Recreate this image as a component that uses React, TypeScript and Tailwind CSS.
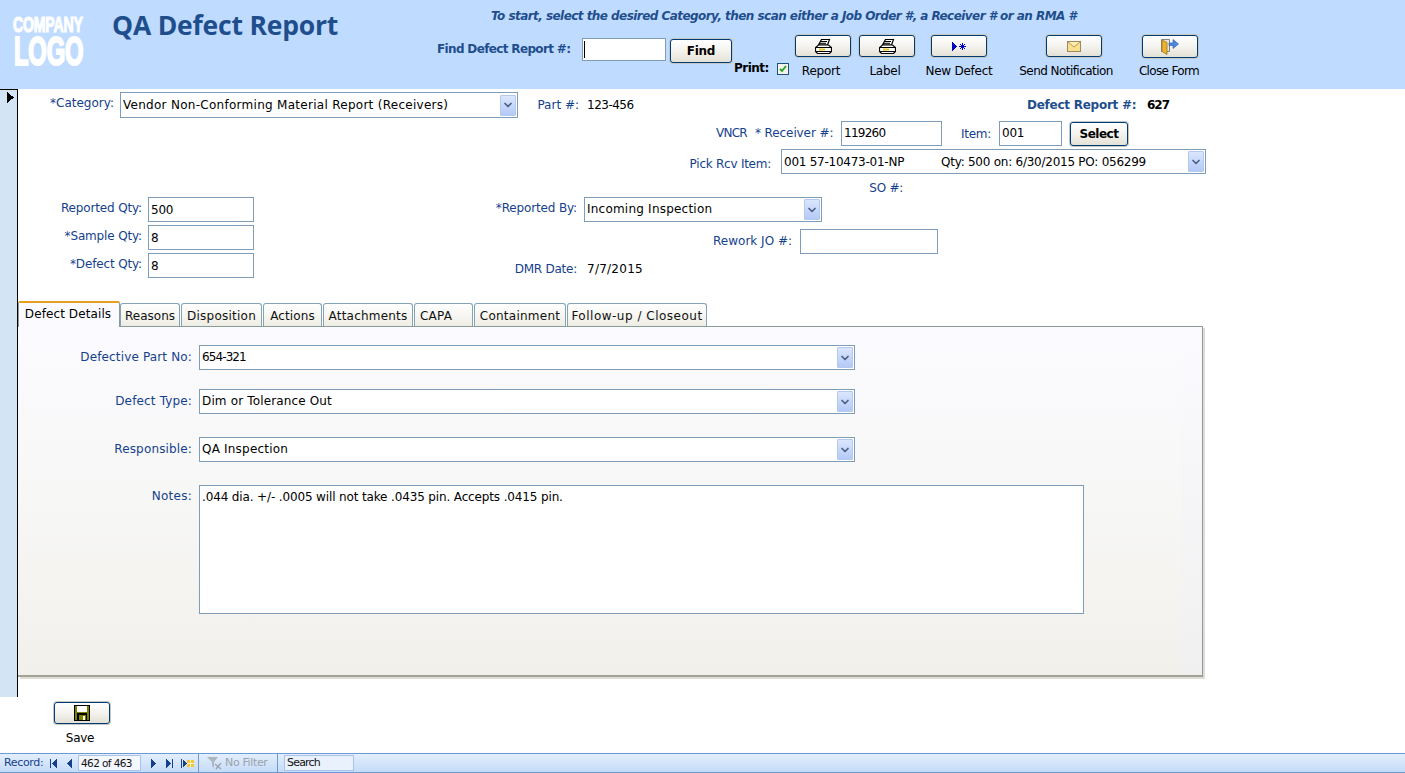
import type { ReactNode } from 'react';
import { ChevronDown } from 'lucide-react';

const uiFont = 'font-["DejaVu_Sans",sans-serif] text-[12px] tracking-[-0.25px]';

function Label({ width, className = '', children }: { width: number; className?: string; children: ReactNode }) {
  return (
    <div className={`shrink-0 text-right text-[#15418c] whitespace-nowrap ${className}`} style={{ width }}>
      {children}
    </div>
  );
}

function TextBox({ width, height = 25, value, className = '' }: { width: number; height?: number; value?: string; className?: string }) {
  return (
    <div
      className={`shrink-0 border border-[#7f9db9] bg-white px-[2px] leading-[22px] text-black whitespace-nowrap ${className}`}
      style={{ width, height }}
    >
      {value}
    </div>
  );
}

function Combo({ width, height = 25, className = '', children }: { width: number; height?: number; className?: string; children: ReactNode }) {
  return (
    <div
      className="shrink-0 flex items-center justify-between border border-[#7f9db9] bg-white pl-[2px] pr-[1px] text-black whitespace-nowrap"
      style={{ width, height }}
    >
      <div className={`flex-1 min-w-0 ${className}`}>{children}</div>
      <div className="flex h-[21px] w-[16px] items-center justify-center rounded-[1px] border border-[#b5c9ef] bg-gradient-to-b from-[#dbe6fd] to-[#b4c9f7]">
        <ChevronDown size={12} strokeWidth={3.5} className="text-[#4d6185]" />
      </div>
    </div>
  );
}

function AccessButton({ width, height = 24, className = '', children }: { width: number; height?: number; className?: string; children: ReactNode }) {
  return (
    <div
      className={`flex shrink-0 items-center justify-center rounded-[3px] border border-[#003c74] bg-gradient-to-b from-white via-[#f4f3ee] to-[#e4e1d6] shadow-[0_0_0_1px_#c4c7c4] ${className}`}
      style={{ width, height }}
    >
      {children}
    </div>
  );
}

function PrinterIcon() {
  return (
    <svg width="17" height="15" viewBox="0 0 17 15">
      <path d="M6.500 0.500h8l-2 5.500h-9z" fill="#fff" stroke="#000" strokeWidth="1.200" />
      <path d="M6 2.500h6M5 4.300h6" stroke="#000" />
      <path d="M3.500 6h10l3 2.500v4l-2 2h-12l-2-2v-4z" fill="#fff" stroke="#000" strokeWidth="1.200" />
      <path d="M1 8.500h15M1 12.500h15" stroke="#000" />
      <path d="M4 10.500h6" stroke="#e6c62c" strokeWidth="2" />
    </svg>
  );
}

function NewRecordIcon() {
  return (
    <svg width="14" height="9" viewBox="0 0 14 9" shapeRendering="crispEdges">
      <path d="M0 0l5 4.500-5 4.500z" fill="#0000c0" />
      <path d="M10.500 1v7M7 4.500h7M8 2l5 5M13 2l-5 5" stroke="#0000c0" />
    </svg>
  );
}

function MailIcon() {
  return (
    <svg width="14" height="11" viewBox="0 0 14 11">
      <rect x="0.500" y="0.500" width="13" height="10" fill="#f8e08e" stroke="#9c8a5e" />
      <path d="M1 1l6 5 6-5" fill="#fdeeb4" stroke="#b89858" />
    </svg>
  );
}

function CloseFormIcon() {
  return (
    <svg width="18" height="16" viewBox="0 0 18 16">
      <path d="M0.500 0.500h8v12h-8z" fill="#e8e4d8" stroke="#85857d" />
      <path d="M1 1l5 2.500v12l-5-3z" fill="#eeb22e" stroke="#9a7418" strokeWidth="0.800" />
      <path d="M8 4h4V0.500l5.500 4.500-5.500 4.500V6.500H8z" fill="#4c88e0" stroke="#2858a0" strokeWidth="0.600" />
    </svg>
  );
}

function SaveIcon() {
  return (
    <svg width="16" height="16" viewBox="0 0 16 16" shapeRendering="crispEdges">
      <path d="M0 0h16v16H0z" fill="#000" />
      <path d="M1 1h2v14H1zM13 1h2v14h-2z" fill="#808000" />
      <path d="M3 1h10v6H3z" fill="#fff" />
      <path d="M3 7h10v1H3z" fill="#808000" />
      <path d="M5 10h7v5H5z" fill="#808000" />
      <path d="M9 11h2v4H9z" fill="#fff" />
    </svg>
  );
}

function ToolbarAction({ label, icon, height = 22, labelClass = '' }: { label: string; icon: ReactNode; height?: number; labelClass?: string }) {
  return (
    <div className="flex w-[56px] flex-col items-center">
      <AccessButton width={56} height={height}>{icon}</AccessButton>
      <div className={`leading-[15px] text-black whitespace-nowrap ${labelClass}`} style={{ marginTop: 29 - height }}>{label}</div>
    </div>
  );
}

function Logo() {
  return (
    <svg width="74" height="54" viewBox="0 0 74 54" className="ml-[13px] mt-[14px] shrink-0 overflow-visible font-['Liberation_Sans',sans-serif] font-bold" fill="#fff" stroke="#fff">
      <text transform="translate(0 18) scale(0.64 1)" fontSize="22" strokeWidth="1.200">COMPANY</text>
      <text transform="translate(1 51) scale(0.594 1)" fontSize="40" strokeWidth="2.200">LOGO</text>
    </svg>
  );
}

function Header() {
  return (
    <header className="flex h-[89px] shrink-0 bg-[#bfdbff]">
      <Logo />
      <div className="ml-[25px] mt-[6px] w-[299px] shrink-0 font-['Open_Sans',sans-serif] text-[26.5px] font-bold leading-[38px] tracking-[-0.2px] text-[#1f4e8c]">
        QA Defect Report
      </div>
      <div className="flex-1 min-w-0">
        <div className="ml-[80px] mt-[9px] font-bold italic leading-[15px] tracking-[-0.55px] text-[#1f4e8c] whitespace-nowrap">
          To start, select the desired Category, then scan either a Job Order #, a Receiver # or an RMA #
        </div>
        <div className="ml-[26px] mt-[11px] flex items-start">
          <div className="mt-[7px] w-[145px] shrink-0 font-bold leading-[15px] tracking-[-0.65px] text-[#1f4e8c] whitespace-nowrap">Find Defect Report #:</div>
          <div className="mr-[4px] mt-[3px] h-[23px] w-[84px] shrink-0 border border-[#7f9db9] bg-white pl-[1px] pt-[2px]">
            <div className="h-[17px] w-px bg-black" />
          </div>
          <AccessButton width={62} className="mt-[4px] font-bold">Find</AccessButton>
          <div className="ml-[2px] mt-[26px] flex items-center">
            <span className="w-[34px] font-bold text-black leading-[15px] tracking-[-0.5px]">Print:</span>
            <span className="ml-[9px] flex h-[12px] w-[12px] items-center justify-center border border-[#1c5180] bg-[#f4f4ec]">
              <svg width="8" height="8" viewBox="0 0 8 8">
                <path d="M1 4l2 2 4-5" fill="none" stroke="#21a121" strokeWidth="1.800" />
              </svg>
            </span>
          </div>
          <div className="ml-[6px] flex items-start">
            <ToolbarAction label="Report" icon={<PrinterIcon />} labelClass="-translate-x-[2px]" />
            <div className="ml-[8px]"><ToolbarAction label="Label" icon={<PrinterIcon />} labelClass="-translate-x-[2px]" /></div>
            <div className="ml-[16px]"><ToolbarAction label="New Defect" icon={<NewRecordIcon />} /></div>
            <div className="ml-[59px]"><ToolbarAction label="Send Notification" icon={<MailIcon />} labelClass="-translate-x-[8px] tracking-[-0.55px]" /></div>
            <div className="ml-[40px]"><ToolbarAction label="Close Form" height={23} icon={<CloseFormIcon />} labelClass="-translate-x-[1px] tracking-[-0.65px]" /></div>
          </div>
        </div>
      </div>
    </header>
  );
}

const tabs = [
  { label: 'Reasons', width: 60, className: 'justify-center tracking-[0px]' },
  { label: 'Disposition', width: 81, className: 'ml-px justify-center tracking-[0.25px]' },
  { label: 'Actions', width: 59, className: 'ml-px justify-center tracking-[0.1px]' },
  { label: 'Attachments', width: 90, className: 'ml-px justify-center tracking-[0.2px]' },
  { label: 'CAPA', width: 59, className: 'ml-px pl-[5px] tracking-[0.2px]' },
  { label: 'Containment', width: 92, className: 'ml-px justify-center tracking-[0.25px]' },
  { label: 'Follow-up / Closeout', width: 140, className: 'ml-px justify-center tracking-[0.5px]' },
];

function TabStrip() {
  return (
    <div className="flex h-[25px] items-end">
      <div className="relative z-10 mb-[-1px] flex h-[26px] w-[102px] items-start justify-center rounded-t-[2px] border-x border-[#8a9c98] border-t-2 border-t-[#e8a020] bg-[#fbfbff] pr-[2px] pt-[2px] tracking-[0.1px] text-black">
        Defect Details
      </div>
      {tabs.map((tab) => (
        <div
          key={tab.label}
          className={`flex h-[23px] items-center rounded-t-[3px] border border-b-0 border-[#85a3b6] bg-gradient-to-b from-white to-[#eeede5] pt-[2px] text-[#111] whitespace-nowrap ${tab.className}`}
          style={{ width: tab.width }}
        >
          {tab.label}
        </div>
      ))}
    </div>
  );
}

function DetailRow({ label, className = '', children }: { label: string; className?: string; children: ReactNode }) {
  return (
    <div className={`flex items-center ${className}`}>
      <Label width={174} className="mr-[7px] mt-[-2px] tracking-[0.15px]">{label}</Label>
      {children}
    </div>
  );
}

function DetailsPanel() {
  return (
    <div className="relative h-[351px] w-[1185px] border-t border-t-[#8a9c98] border-b-2 border-b-[#a2a298] border-r border-r-[#8f979f] bg-gradient-to-b from-[#fbfbff] via-[#f7f7f6] to-[#f2f0eb] pt-[18px] shadow-[2px_2px_0_#e0ddd6]">
      <div className="absolute inset-y-0 right-0 w-[21px] bg-gradient-to-b from-[#fbfbff] to-[#f0f0f0]" />
      <div className="relative">
        <DetailRow label="Defective Part No:">
          <Combo width={656} className="pb-[2px] tracking-[-0.9px]">654-321</Combo>
        </DetailRow>
        <DetailRow label="Defect Type:" className="mt-[19px]">
          <Combo width={656} className="pb-[2px] tracking-[0.15px]">Dim or Tolerance Out</Combo>
        </DetailRow>
        <DetailRow label="Responsible:" className="mt-[23px]">
          <Combo width={656} className="pb-[2px] tracking-[0.2px]">QA Inspection</Combo>
        </DetailRow>
        <div className="mt-[23px] flex items-start">
          <Label width={174} className="mr-[7px] mt-[2px] tracking-[0.25px]">Notes:</Label>
          <div className="h-[129px] w-[885px] border border-[#7f9db9] bg-white px-[2px] pt-[2px] tracking-[-0.14px] text-black">
            .044 dia. +/- .0005 will not take .0435 pin. Accepts .0415 pin.
          </div>
        </div>
      </div>
    </div>
  );
}

function TopForm() {
  return (
    <>
      <div className="mt-[3px] flex h-[26px] items-center">
        <Label width={96} className="mr-[6px] mt-[-5px] tracking-[0px]">*Category:</Label>
        <Combo width={398} height={26} className="tracking-[0.28px]">Vendor Non-Conforming Material Report (Receivers)</Combo>
        <Label width={42} className="ml-[19px] tracking-[0px]">Part #:</Label>
        <span className="ml-[8px] w-[440px] tracking-[-0.5px] text-black">123-456</span>
        <span className="font-bold text-[#1f4e8c] whitespace-nowrap w-[120px]">Defect Report #:</span>
        <span className="font-bold tracking-[-1px] text-black">627</span>
      </div>
      <div className="mt-[3px] flex h-[25px] items-center">
        <Label width={32} className="ml-[697px] mt-[-2px] tracking-[-0.7px]">VNCR</Label>
        <Label width={78} className="ml-[8px] mr-[8px] mt-[-2px] tracking-[-0.1px]">* Receiver #:</Label>
        <TextBox width={101} value="119260" className="tracking-[-0.75px]" />
        <Label width={32} className="ml-[17px] mr-[8px]">Item:</Label>
        <TextBox width={63} value="001" />
        <AccessButton width={58} className="ml-[8px] font-bold tracking-[-0.5px]">Select</AccessButton>
      </div>
      <div className="mt-[3px] flex h-[25px] items-center">
        <Label width={82} className="ml-[671px] mr-[10px] mt-[5px]">Pick Rcv Item:</Label>
        <Combo width={425}>
          <span className="inline-block w-[157px]">001 57-10473-01-NP</span>
          Qty: 500 on: 6/30/2015 PO: 056299
        </Combo>
      </div>
      <div className="mt-[5px] h-[18px]">
        <Label width={36} className="ml-[849px]">SO #:</Label>
      </div>
      <div className="flex">
        <div className="w-[236px] shrink-0 space-y-[3px]">
          {[
            ['Reported Qty:', '500'],
            ['*Sample Qty:', '8'],
            ['*Defect Qty:', '8'],
          ].map(([label, value]) => (
            <div key={label} className="flex items-center">
              <Label width={124} className="mr-[6px] mt-[-3px] tracking-[-0.15px]">{label}</Label>
              <TextBox width={106} value={value} className="leading-[24px]" />
            </div>
          ))}
        </div>
        <div>
          <div className="flex items-center">
            <Label width={323} className="mr-[7px] mt-[-3px] tracking-[-0.15px]">*Reported By:</Label>
            <Combo width={238} className="pb-[1px] tracking-[0.22px]">Incoming Inspection</Combo>
          </div>
          <div className="mt-[7px] flex items-center">
            <Label width={538} className="mr-[8px] mt-[-1px] tracking-[0px]">Rework JO #:</Label>
            <TextBox width={138} value="" />
          </div>
          <div className="mt-[8px] flex items-center leading-[15px]">
            <Label width={323} className="mr-[10px]">DMR Date:</Label>
            <span className="tracking-[0.25px] text-black">7/7/2015</span>
          </div>
        </div>
      </div>
    </>
  );
}

function NavIcon({ d }: { d: string }) {
  return (
    <svg width="8" height="9" viewBox="0 0 8 9" className="shrink-0" shapeRendering="crispEdges">
      <path d={d} fill="#15418c" />
    </svg>
  );
}

function StatusBar() {
  return (
    <footer className="flex h-[20px] shrink-0 items-center border-y border-[#6b9bd4] bg-gradient-to-b from-[#e3effd] to-[#c5dbf7] text-[11px] tracking-[-0.35px] text-[#15418c]">
      <span className="ml-[4px] w-[44px] text-[#15418c]">Record:</span>
      <span className="ml-[2px]"><NavIcon d="M0 0h1v9H0zM7 0v9L2 4.500z" /></span>
      <span className="ml-[8px]"><NavIcon d="M6 0v9L1 4.500z" /></span>
      <div className="ml-[4px] h-[16px] w-[63px] border border-[#a9c4e8] bg-[#f4f8fe] px-[2px] text-[10.5px] leading-[14px] tracking-[-0.6px] whitespace-nowrap text-[#111]">462 of 463</div>
      <span className="ml-[8px]"><NavIcon d="M2 0v9l5-4.500z" /></span>
      <span className="ml-[9px]"><NavIcon d="M0 0v9l5-4.500zM6 0h1v9H6z" /></span>
      <span className="ml-[7px] flex items-center">
        <NavIcon d="M0 0h1v9H0zM2 0v9l4-4.500z" />
        <svg width="7" height="7" viewBox="0 0 7 7" className="ml-[-2px]"><path d="M0 0h7v7H0z" fill="#f2c53d" /><path d="M3 0h1v7H3zM0 3h7v1H0z" fill="#fff4c0" /></svg>
      </span>
      <div className="ml-[4px] flex h-full w-[80px] items-center border-x border-[#6b9bd4] pl-[8px] text-[#9aa3ac]">
        <svg width="15" height="14" viewBox="0 0 15 14" className="mr-[3px] shrink-0">
          <path d="M0 1h11L7 6v6l-2-2V6z" fill="#aeb6bf" />
          <path d="M8 8l6 5M14 7l-5 6" stroke="#9aa3ac" strokeWidth="1.300" />
        </svg>
        <span className="whitespace-nowrap">No Filter</span>
      </div>
      <div className="ml-[6px] h-[16px] w-[70px] border border-[#a9c4e8] bg-[#e9f1fc] px-[2px] leading-[14px] tracking-[-0.8px] text-[#111]">Search</div>
    </footer>
  );
}

export default function App() {
  return (
    <div className={`flex h-[773px] w-[1405px] flex-col overflow-hidden bg-white ${uiFont}`}>
      <Header />
      <div className="flex h-[608px] shrink-0">
        <div className="w-[18px] shrink-0 border-r border-t border-black bg-[#d3e4f4] pt-[2px]">
          <svg width="7" height="11" viewBox="0 0 7 11" className="ml-[7px]" shapeRendering="crispEdges">
            <path d="M0 0l7 5.500-7 5.500z" fill="#000" />
          </svg>
        </div>
        <main className="flex-1 min-w-0">
          <TopForm />
          <div className="mt-[23px]">
            <TabStrip />
            <DetailsPanel />
          </div>
        </main>
      </div>
      <div className="h-[56px] shrink-0 pl-[54px] pt-[5px]">
        <div className="flex w-[56px] flex-col items-center">
          <AccessButton width={56} height={22}><SaveIcon /></AccessButton>
          <div className="mt-[7px] -translate-x-[2px] leading-[15px] text-black">Save</div>
        </div>
      </div>
      <StatusBar />
    </div>
  );
}
